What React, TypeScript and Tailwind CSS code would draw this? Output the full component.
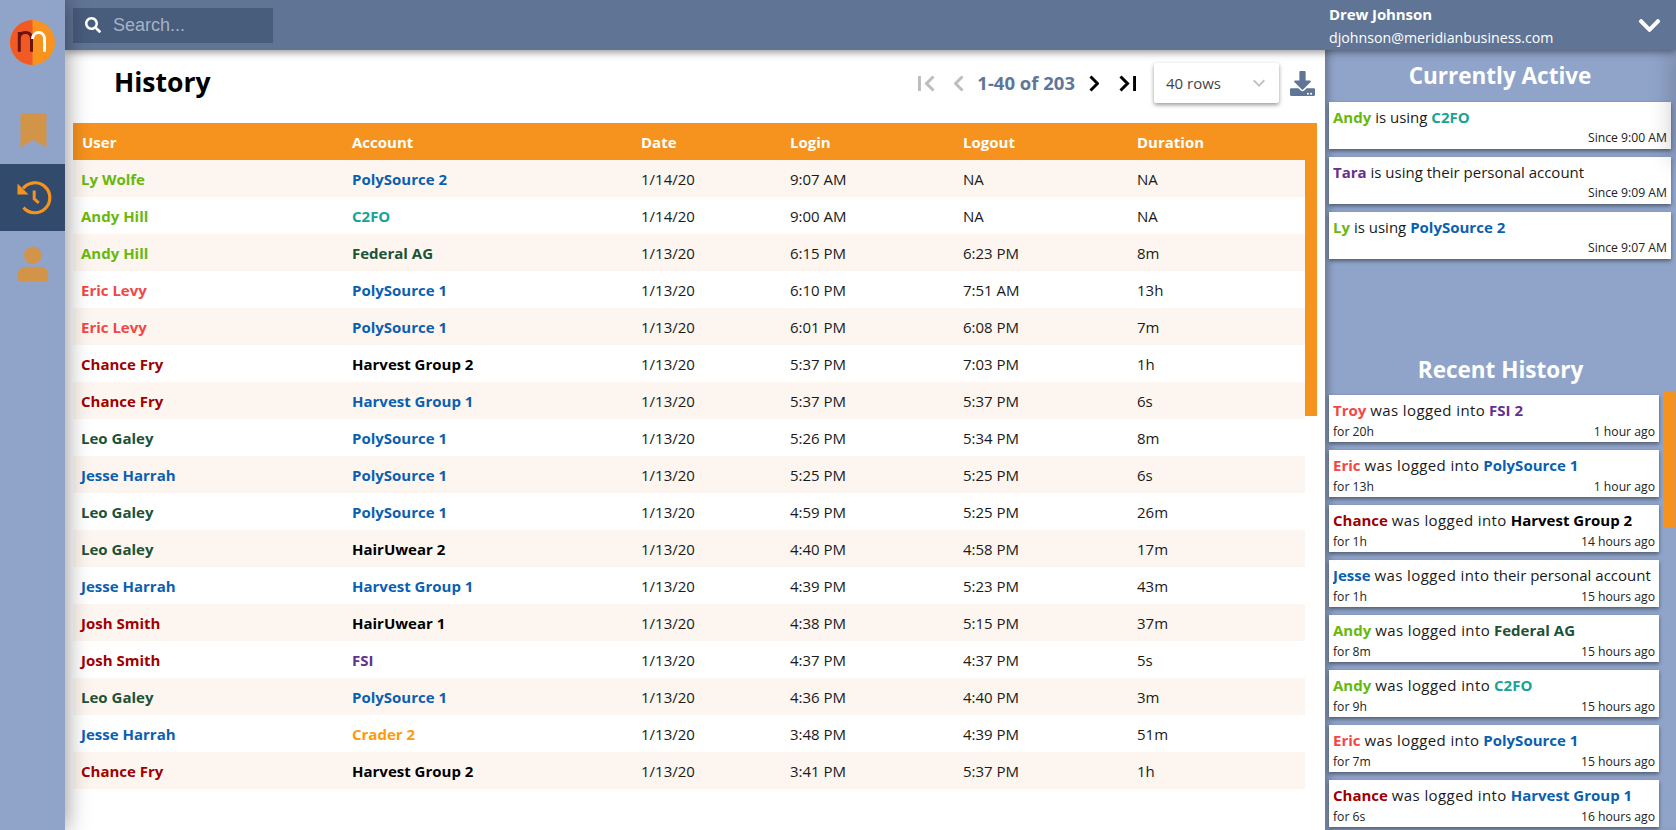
import { FaChevronDown, FaDownload, FaSearch } from 'react-icons/fa';
import { MdExpandMore } from 'react-icons/md';

const GREEN = 'text-[#66b90c]';
const RED = 'text-[#f44646]';
const MAROON = 'text-[#a00000]';
const FOREST = 'text-[#1c5236]';
const BLUE = 'text-[#0b5fb0]';
const TEAL = 'text-[#17a398]';
const PURPLE = 'text-[#66308f]';
const AMBER = 'text-[#ff9a0a]';
const BLACK = 'text-black';

const rows = [
  ['Ly Wolfe', GREEN, 'PolySource 2', BLUE, '1/14/20', '9:07 AM', 'NA', 'NA'],
  ['Andy Hill', GREEN, 'C2FO', TEAL, '1/14/20', '9:00 AM', 'NA', 'NA'],
  ['Andy Hill', GREEN, 'Federal AG', FOREST, '1/13/20', '6:15 PM', '6:23 PM', '8m'],
  ['Eric Levy', RED, 'PolySource 1', BLUE, '1/13/20', '6:10 PM', '7:51 AM', '13h'],
  ['Eric Levy', RED, 'PolySource 1', BLUE, '1/13/20', '6:01 PM', '6:08 PM', '7m'],
  ['Chance Fry', MAROON, 'Harvest Group 2', BLACK, '1/13/20', '5:37 PM', '7:03 PM', '1h'],
  ['Chance Fry', MAROON, 'Harvest Group 1', BLUE, '1/13/20', '5:37 PM', '5:37 PM', '6s'],
  ['Leo Galey', FOREST, 'PolySource 1', BLUE, '1/13/20', '5:26 PM', '5:34 PM', '8m'],
  ['Jesse Harrah', BLUE, 'PolySource 1', BLUE, '1/13/20', '5:25 PM', '5:25 PM', '6s'],
  ['Leo Galey', FOREST, 'PolySource 1', BLUE, '1/13/20', '4:59 PM', '5:25 PM', '26m'],
  ['Leo Galey', FOREST, 'HairUwear 2', BLACK, '1/13/20', '4:40 PM', '4:58 PM', '17m'],
  ['Jesse Harrah', BLUE, 'Harvest Group 1', BLUE, '1/13/20', '4:39 PM', '5:23 PM', '43m'],
  ['Josh Smith', MAROON, 'HairUwear 1', BLACK, '1/13/20', '4:38 PM', '5:15 PM', '37m'],
  ['Josh Smith', MAROON, 'FSI', PURPLE, '1/13/20', '4:37 PM', '4:37 PM', '5s'],
  ['Leo Galey', FOREST, 'PolySource 1', BLUE, '1/13/20', '4:36 PM', '4:40 PM', '3m'],
  ['Jesse Harrah', BLUE, 'Crader 2', AMBER, '1/13/20', '3:48 PM', '4:39 PM', '51m'],
  ['Chance Fry', MAROON, 'Harvest Group 2', BLACK, '1/13/20', '3:41 PM', '5:37 PM', '1h'],
];

const active = [
  { name: 'Andy', nameColor: GREEN, account: 'C2FO', accountColor: TEAL, since: 'Since 9:00 AM' },
  { name: 'Tara', nameColor: PURPLE, since: 'Since 9:09 AM' },
  { name: 'Ly', nameColor: GREEN, account: 'PolySource 2', accountColor: BLUE, since: 'Since 9:07 AM' },
];

const recent = [
  { name: 'Troy', nameColor: RED, account: 'FSI 2', accountColor: PURPLE, dur: 'for 20h', ago: '1 hour ago' },
  { name: 'Eric', nameColor: RED, account: 'PolySource 1', accountColor: BLUE, dur: 'for 13h', ago: '1 hour ago' },
  { name: 'Chance', nameColor: MAROON, account: 'Harvest Group 2', accountColor: BLACK, dur: 'for 1h', ago: '14 hours ago' },
  { name: 'Jesse', nameColor: BLUE, dur: 'for 1h', ago: '15 hours ago' },
  { name: 'Andy', nameColor: GREEN, account: 'Federal AG', accountColor: FOREST, dur: 'for 8m', ago: '15 hours ago' },
  { name: 'Andy', nameColor: GREEN, account: 'C2FO', accountColor: TEAL, dur: 'for 9h', ago: '15 hours ago' },
  { name: 'Eric', nameColor: RED, account: 'PolySource 1', accountColor: BLUE, dur: 'for 7m', ago: '15 hours ago' },
  { name: 'Chance', nameColor: MAROON, account: 'Harvest Group 1', accountColor: BLUE, dur: 'for 6s', ago: '16 hours ago' },
];

const columns = 'grid grid-cols-[271px_289px_149px_173px_174px_1fr] items-center px-2';

function Logo() {
  return (
    <svg width="45" height="45" viewBox="0 0 45 45">
      <circle cx="22.5" cy="22.5" r="22.5" fill="#f7931e" />
      <path d="M22.5 0a22.5 22.5 0 0 0 0 45z" fill="#f15a24" />
      <path d="M9.3 31.7V12M9.3 19c0-5 3.2-6.5 6.2-6.5 4 0 6 2.5 6 6.5v12.7" fill="none" stroke="#6e1210" strokeWidth="3" />
      <path d="M22.5 19c0-4 3-6.5 6-6.5 3.500 0 6 2.500 6 6.500v12.700" fill="none" stroke="#fff" strokeWidth="3" />
    </svg>
  );
}

function BookmarkIcon() {
  return (
    <svg width="27" height="35" viewBox="0 0 27 35" fill="currentColor">
      <path d="M2.500 0h22a2 2 0 0 1 2 2v32.500l-13-7.500-13 7.500V2a2 2 0 0 1 2-2z" />
    </svg>
  );
}

function HistoryIcon() {
  return (
    <svg width="38" height="38" viewBox="0 0 38 38" fill="none" stroke="currentColor" strokeWidth="3.2">
      <path d="M9 9.500A15 15 0 1 1 9.500 28.600" />
      <path d="M3.500 4.500v11h11z" fill="currentColor" stroke="none" />
      <path d="M20.200 11.500v8.300l4.600 4" strokeWidth="3" />
    </svg>
  );
}

function UserIcon() {
  return (
    <svg width="32" height="36" viewBox="0 0 32 36" fill="currentColor">
      <circle cx="15.800" cy="9.200" r="8.700" />
      <path d="M8 20.800h16a7.500 7.500 0 0 1 7.200 7.500v4.500a2.500 2.500 0 0 1-2.500 2.400H3.300a2.500 2.500 0 0 1-2.500-2.400v-4.500A7.500 7.500 0 0 1 8 20.800z" />
    </svg>
  );
}

function PagerIcon({ kind, className }: { kind: 'first' | 'prev' | 'next' | 'last'; className: string }) {
  if (kind === 'first' || kind === 'last') {
    return (
      <svg width="17" height="17" viewBox="0 0 17 17" fill="none" stroke="currentColor" strokeWidth="3" className={className}>
        {kind === 'first' ? <path d="M1.400 1v15M15.500 1.500l-7 7 7 7" /> : <path d="M1.500 1.500l7 7-7 7M15.600 1v15" />}
      </svg>
    );
  }
  return (
    <svg width="10" height="17" viewBox="0 0 10 17" fill="none" stroke="currentColor" strokeWidth="3" className={className}>
      {kind === 'prev' ? <path d="M8.500 1.500l-7 7 7 7" /> : <path d="M1.500 1.500l7 7-7 7" />}
    </svg>
  );
}

function Sidebar() {
  return (
    <aside className="z-20 flex w-[65px] shrink-0 flex-col items-center bg-[#90a4ca] pt-5 shadow-[0_0_24px_rgba(0,0,0,0.45)]">
      <Logo />
      <div className="ml-[2px] mt-[48px] flex h-[35px] items-center text-[#d29448]">
        <BookmarkIcon />
      </div>
      <div className="mt-[16px] flex h-[67px] w-full items-center justify-center bg-[#324a6b] text-[#f6921e]">
        <HistoryIcon />
      </div>
      <div className="mt-[15px] flex h-[36px] items-center text-[#d29448]">
        <UserIcon />
      </div>
    </aside>
  );
}

function TopBar() {
  return (
    <header className="z-10 flex h-[50px] shrink-0 items-center justify-between bg-[#607496] pl-2 pr-[14px] shadow-[0_2px_8px_rgba(0,0,0,0.45)]">
      <div className="flex h-[35px] w-[200px] items-center gap-3 bg-[#485c7c] pl-3">
        <FaSearch size={16} className="text-white" />
        <input
          placeholder="Search..."
          className="w-[150px] bg-transparent font-['Liberation_Sans',sans-serif] text-[18px] outline-none placeholder:text-[#a6b2c6]"
        />
      </div>
      <div className="flex items-center">
        <div className="w-[308px] pt-[2px] text-white">
          <div className="text-[15px] font-bold leading-[21px] tracking-[-0.1px]">Drew Johnson</div>
          <div className="mt-[2px] text-[14.2px] leading-[21px]">djohnson@meridianbusiness.com</div>
        </div>
        <FaChevronDown size={25} className="text-white" />
      </div>
    </header>
  );
}

function Toolbar() {
  return (
    <div className="flex h-[73px] shrink-0 items-center justify-between pb-[7px] pl-[49px] pr-[10px]">
      <h1 className="text-[26.5px] font-bold text-black">History</h1>
      <div className="flex items-center">
        <PagerIcon kind="first" className="text-[#bdbdbd]" />
        <PagerIcon kind="prev" className="ml-[19px] text-[#bdbdbd]" />
        <span className="ml-[13px] text-[18.5px] font-bold text-[#5f7599]">1-40 of 203</span>
        <PagerIcon kind="next" className="ml-[14px] text-black" />
        <PagerIcon kind="last" className="ml-[20px] text-black" />
        <div className="ml-[18px] flex h-[40px] w-[125px] items-center justify-between rounded-[2px] bg-white pl-3 pr-2 shadow-[0_2px_4px_rgba(0,0,0,0.4)]">
          <span className="text-[15px] text-[#444]">40 rows</span>
          <MdExpandMore size={24} className="text-[#c4c4c4]" />
        </div>
        <FaDownload size={25} className="ml-[11px] text-[#607496]" />
      </div>
    </div>
  );
}

function HistoryTable() {
  return (
    <div className="ml-2 mr-2 flex min-h-0 flex-col">
      <div className={`${columns} h-[37px] shrink-0 bg-[#f6921e] pt-[2px] text-[15px] font-bold text-white`}>
        <div className="pl-px">User</div>
        <div>Account</div>
        <div>Date</div>
        <div>Login</div>
        <div>Logout</div>
        <div>Duration</div>
      </div>
      <div className="flex items-start">
        <div className="w-[1232px]">
          {rows.map((r, i) => (
            <div key={i} className={`${columns} h-[37px] pt-[2px] text-[15px] text-[#1a1a1a] ${i % 2 === 0 ? 'bg-[#fdf6f0]' : 'bg-white'}`}>
              <div className={`font-bold ${r[1]}`}>{r[0]}</div>
              <div className={`font-bold ${r[3]}`}>{r[2]}</div>
              <div>{r[4]}</div>
              <div>{r[5]}</div>
              <div>{r[6]}</div>
              <div>{r[7]}</div>
            </div>
          ))}
        </div>
        <div className="h-[256px] w-[12px] bg-[#f6921e]" />
      </div>
    </div>
  );
}

function Who({ name, nameColor, account, accountColor, verb, verbClass }: { name: string; nameColor: string; account?: string; accountColor?: string; verb: string; verbClass?: string }) {
  return (
    <div className="truncate text-[15px] leading-[20px] text-[#1a1a1a]">
      <span className={`font-bold ${nameColor}`}>{name}</span> <span className={verbClass}>{verb}</span>{' '}
      {account ? <span className={`font-bold ${accountColor}`}>{account}</span> : 'their personal account'}
    </div>
  );
}

function RightPanel() {
  return (
    <aside className="relative flex w-[351px] shrink-0 flex-col overflow-hidden bg-[#90a4ca] shadow-[inset_8px_0_8px_-5px_rgba(0,0,0,0.3)]">
      <section className="h-[293px] shrink-0 pl-1 pr-[5px]">
        <h2 className="flex h-[52px] items-center justify-center text-[22.5px] font-bold text-white">Currently Active</h2>
        <div className="flex flex-col gap-2">
          {active.map((a, i) => (
            <div key={i} className="h-[47px] bg-white px-1 pt-[5px] shadow-[0_2px_4px_rgba(0,0,0,0.45)]">
              <Who {...a} verb="is using" />
              <div className="mt-px text-right text-[12.2px] leading-[20px] text-[#222]">{a.since}</div>
            </div>
          ))}
        </div>
      </section>
      <section className="flex min-h-0 flex-1 flex-col">
        <h2 className="flex h-[48px] shrink-0 items-center justify-center pt-[6px] text-[22.5px] font-bold text-white">Recent History</h2>
        <div className="flex min-h-0 items-start pl-1">
          <div className="flex w-[330px] shrink-0 flex-col gap-2 pt-1">
            {recent.map((a, i) => (
              <div key={i} className="h-[47px] shrink-0 bg-white px-1 pt-[5px] shadow-[0_2px_4px_rgba(0,0,0,0.45)]">
                <Who {...a} verb="was logged into" verbClass="tracking-[0.4px]" />
                <div className="mt-[2px] flex justify-between text-[12.2px] leading-[20px] text-[#222]">
                  <span>{a.dur}</span>
                  <span>{a.ago}</span>
                </div>
              </div>
            ))}
          </div>
          <div className="ml-1 h-[136px] w-[12px] shrink-0 bg-[#f6921e]" />
        </div>
      </section>
      <div className="pointer-events-none absolute right-[-10px] top-0 h-[110px] w-[10px] shadow-[0_0_24px_rgba(0,0,0,0.4)]" />
    </aside>
  );
}

export default function App() {
  return (
    <div className="flex h-screen w-screen overflow-hidden bg-white font-['Open_Sans',sans-serif]">
      <Sidebar />
      <div className="flex min-w-0 flex-1 flex-col">
        <TopBar />
        <div className="flex min-h-0 flex-1">
          <main className="flex min-w-0 flex-1 flex-col overflow-hidden bg-white">
            <Toolbar />
            <HistoryTable />
          </main>
          <RightPanel />
        </div>
      </div>
    </div>
  );
}
